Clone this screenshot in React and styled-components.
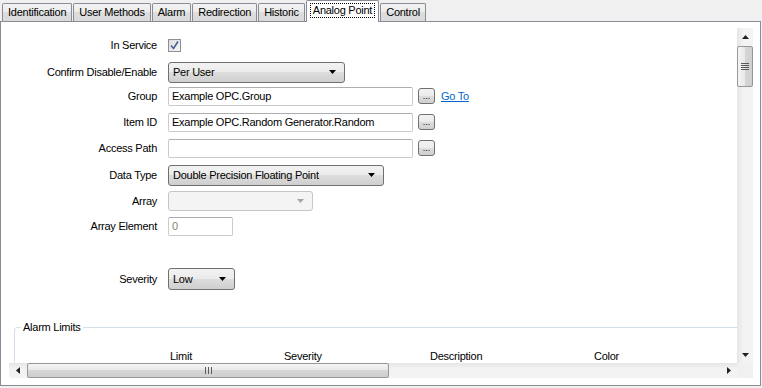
import React from 'react';
import styled, { createGlobalStyle, css } from 'styled-components';

const GlobalStyle = createGlobalStyle`
  html, body { margin: 0; padding: 0; background: #f0f0f0; }
  body {
    font-family: "Liberation Sans", Arial, sans-serif;
    font-size: 11px;
    letter-spacing: -0.25px;
    color: #000;
  }
`;

const Window = styled.div`
  width: 762px;
  height: 388px;
  background: #f0f0f0;
  display: flex;
  flex-direction: column;
`;

const TabStrip = styled.div`
  display: flex;
  align-items: flex-end;
  height: 21px;
  padding-left: 2px;
  gap: 1px;
`;

const Tab = styled.div`
  box-sizing: border-box;
  height: 18px;
  display: flex;
  align-items: center;
  padding: 0 2px;
  border: 1px solid #898c95;
  border-bottom: none;
  border-radius: 2px 2px 0 0;
  background: linear-gradient(#f3f3f3, #ebebeb 50%, #dedede 50%, #d9d9d9);
  white-space: nowrap;
  ${p => p.$active && css`
    position: relative;
    z-index: 2;
    height: 22px;
    margin-bottom: -1px;
    padding: 0 3px 2px;
    background: #fff;
  `}
`;

const TabText = styled.span`
  padding: 0 2px;
  line-height: 13px;
  border: 1px dotted ${p => (p.$focus ? '#000' : 'transparent')};
`;

const Panel = styled.div`
  box-sizing: border-box;
  width: 761px;
  height: 365px;
  border: 1px solid #898c95;
  background: #fff;
  padding: 6px 7px 7px 8px;
`;

const Viewport = styled.div`
  display: grid;
  grid-template-columns: 1fr 16px;
  grid-template-rows: 1fr 15px;
  height: 100%;
`;

const Content = styled.div`
  overflow: hidden;
  min-width: 0;
`;

const Form = styled.div`
  display: flex;
  flex-direction: column;
  padding-top: 5px;
`;

const Row = styled.div`
  display: grid;
  grid-template-columns: 148px auto;
  column-gap: 11px;
  align-items: center;
  height: 24px;
  margin-top: ${p => p.$mt || 0}px;
`;

const Label = styled.div`
  text-align: right;
  white-space: nowrap;
`;

const Controls = styled.div`
  display: flex;
  align-items: center;
`;

const CheckBox = styled.div`
  box-sizing: border-box;
  width: 13px;
  height: 13px;
  border: 1px solid #8f8f8f;
  background: linear-gradient(135deg, #dcdcdc, #f6f6f6);
  display: flex;
  align-items: center;
  justify-content: center;
`;

const TextBox = styled.div`
  box-sizing: border-box;
  width: ${p => p.$w}px;
  height: 19px;
  padding: 0 3px;
  display: flex;
  align-items: center;
  border: 1px solid #c8cbd0;
  border-top-color: #abadb3;
  border-radius: 2px;
  background: #fff;
  color: ${p => (p.$muted ? '#8a7f70' : '#000')};
  white-space: nowrap;
`;

const Combo = styled.div`
  box-sizing: border-box;
  width: ${p => p.$w}px;
  height: ${p => p.$h || 21}px;
  padding: 0 8px 0 4px;
  display: flex;
  align-items: center;
  justify-content: space-between;
  border: 1px solid #707070;
  border-radius: 3px;
  background: linear-gradient(#f2f2f2, #ebebeb 50%, #dddddd 50%, #cfcfcf);
  white-space: nowrap;
  ${p => p.$disabled && css`
    border-color: #c6c6c6;
    background: #f4f4f4;
  `}
`;

const BrowseButton = styled.div`
  box-sizing: border-box;
  width: 17px;
  height: 16px;
  margin-left: 5px;
  border: 1px solid #707070;
  border-radius: 3px;
  background: linear-gradient(#f2f2f2, #ebebeb 50%, #dddddd 50%, #cfcfcf);
  font-size: 9px;
  line-height: 9px;
  letter-spacing: 0;
  display: flex;
  align-items: flex-end;
  justify-content: center;
  padding-bottom: 2px;
`;

const Link = styled.a`
  margin-left: 6px;
  color: #0066cc;
  text-decoration: underline;
  cursor: pointer;
`;

const GroupBox = styled.fieldset`
  margin: 30px 0 0 5px;
  padding: 0;
  width: 900px;
  border: 1px solid #d5dfe5;
  border-radius: 3px;
  min-height: 60px;
`;

const Legend = styled.legend`
  margin-left: 6px;
  padding: 0 2px;
  line-height: 13px;
`;

const HeaderRow = styled.div`
  display: grid;
  grid-template-columns: 114px 146px 164px 80px;
  padding-left: 155px;
  margin-top: 16px;
`;

const VScroll = styled.div`
  display: flex;
  flex-direction: column;
  background: linear-gradient(to right, #e6e6e6, #f3f3f3 40%, #f3f3f3);
`;

const HScroll = styled.div`
  display: flex;
  align-items: stretch;
  background: linear-gradient(#e6e6e6, #f3f3f3 40%, #f3f3f3);
`;

const Corner = styled.div`
  background: #f0f0f0;
`;

const ArrowButton = styled.div`
  flex: 0 0 17px;
  display: flex;
  align-items: center;
  justify-content: center;
`;

const Thumb = styled.div`
  box-sizing: border-box;
  border: 1px solid #979797;
  border-radius: 2px;
  display: flex;
  align-items: center;
  justify-content: center;
  ${p => (p.$vertical
    ? css`
        height: 41px;
        margin: 1px 0 0;
        background: linear-gradient(to right, #f4f4f4, #e8e8e8 50%, #d6d6d6 50%, #cfcfcf);
      `
    : css`
        width: 362px;
        margin: 0 0 0 1px;
        background: linear-gradient(#f4f4f4, #e8e8e8 50%, #d6d6d6 50%, #cfcfcf);
      `)}
`;

const Spacer = styled.div`
  flex: 1;
`;

function Arrow({ dir, color = '#000' }) {
  const pts = {
    up: '0,4 7,4 3.5,0',
    down: '0,0 7,0 3.5,4',
    left: '4,0 4,7 0,3.5',
    right: '0,0 0,7 4,3.5',
  }[dir];
  const horiz = dir === 'left' || dir === 'right';
  return (
    <svg width={horiz ? 4 : 7} height={horiz ? 7 : 4} viewBox={horiz ? '0 0 4 7' : '0 0 7 4'}>
      <polygon points={pts} fill={color} />
    </svg>
  );
}

function Grip({ vertical }) {
  return vertical ? (
    <svg width="8" height="8" viewBox="0 0 8 8">
      {[0, 2, 4, 6].map(y => (
        <rect key={y} x="0" y={y} width="8" height="1" fill="#5a5a5a" />
      ))}
    </svg>
  ) : (
    <svg width="7" height="7" viewBox="0 0 7 7">
      {[0, 3, 6].map(x => (
        <rect key={x} x={x} y="0" width="1" height="7" fill="#5a5a5a" />
      ))}
    </svg>
  );
}

const tabs = ['Identification', 'User Methods', 'Alarm', 'Redirection', 'Historic', 'Analog Point', 'Control'];

export default function App() {
  return (
    <Window>
      <GlobalStyle />
      <TabStrip>
        {tabs.map(t => (
          <Tab key={t} $active={t === 'Analog Point'}>
            <TabText $focus={t === 'Analog Point'}>{t}</TabText>
          </Tab>
        ))}
      </TabStrip>
      <Panel>
        <Viewport>
          <Content>
            <Form>
              <Row>
                <Label>In Service</Label>
                <Controls>
                  <CheckBox>
                    <svg width="9" height="9" viewBox="0 0 9 9">
                      <path d="M1 4.5 L3.5 7.5 L8 0.5" stroke="#4a5f97" strokeWidth="1.6" fill="none" />
                    </svg>
                  </CheckBox>
                </Controls>
              </Row>
              <Row $mt={3}>
                <Label>Confirm Disable/Enable</Label>
                <Controls>
                  <Combo $w={177}>Per User<Arrow dir="down" /></Combo>
                </Controls>
              </Row>
              <Row>
                <Label>Group</Label>
                <Controls>
                  <TextBox $w={245}>Example OPC.Group</TextBox>
                  <BrowseButton>...</BrowseButton>
                  <Link>Go To</Link>
                </Controls>
              </Row>
              <Row $mt={2}>
                <Label>Item ID</Label>
                <Controls>
                  <TextBox $w={245}>Example OPC.Random Generator.Random</TextBox>
                  <BrowseButton>...</BrowseButton>
                </Controls>
              </Row>
              <Row $mt={2}>
                <Label>Access Path</Label>
                <Controls>
                  <TextBox $w={245} />
                  <BrowseButton>...</BrowseButton>
                </Controls>
              </Row>
              <Row $mt={3}>
                <Label>Data Type</Label>
                <Controls>
                  <Combo $w={216}>Double Precision Floating Point<Arrow dir="down" /></Combo>
                </Controls>
              </Row>
              <Row $mt={2}>
                <Label>Array</Label>
                <Controls>
                  <Combo $w={145} $h={20} $disabled><span /><Arrow dir="down" color="#a5a5a5" /></Combo>
                </Controls>
              </Row>
              <Row $mt={1}>
                <Label>Array Element</Label>
                <Controls>
                  <TextBox $w={65} $muted>0</TextBox>
                </Controls>
              </Row>
              <Row $mt={29}>
                <Label>Severity</Label>
                <Controls>
                  <Combo $w={67} $h={22}>Low<Arrow dir="down" /></Combo>
                </Controls>
              </Row>
            </Form>
            <GroupBox>
              <Legend>Alarm Limits</Legend>
              <HeaderRow>
                <span>Limit</span>
                <span>Severity</span>
                <span>Description</span>
                <span>Color</span>
              </HeaderRow>
            </GroupBox>
          </Content>
          <VScroll>
            <ArrowButton><Arrow dir="up" color="#222" /></ArrowButton>
            <Thumb $vertical><Grip vertical /></Thumb>
            <Spacer />
            <ArrowButton><Arrow dir="down" color="#222" /></ArrowButton>
          </VScroll>
          <HScroll>
            <ArrowButton><Arrow dir="left" color="#222" /></ArrowButton>
            <Thumb><Grip /></Thumb>
            <Spacer />
            <ArrowButton><Arrow dir="right" color="#222" /></ArrowButton>
          </HScroll>
          <Corner />
        </Viewport>
      </Panel>
    </Window>
  );
}
